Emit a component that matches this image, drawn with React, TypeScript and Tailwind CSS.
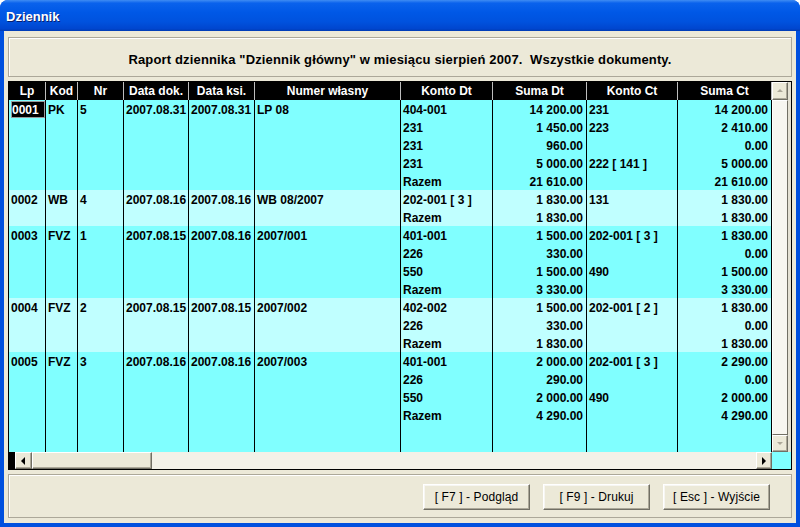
import React from "react";

type Line = [string, string, string, string];
type Group = {
  lp: string;
  kod: string;
  nr: string;
  dd: string;
  dk: string;
  num: string;
  light: boolean;
  lines: Line[];
};

const groups: Group[] = [
  {
    lp: "0001", kod: "PK", nr: "5", dd: "2007.08.31", dk: "2007.08.31", num: "LP 08", light: false,
    lines: [
      ["404-001", "14 200.00", "231", "14 200.00"],
      ["231", "1 450.00", "223", "2 410.00"],
      ["231", "960.00", "", "0.00"],
      ["231", "5 000.00", "222 [ 141 ]", "5 000.00"],
      ["Razem", "21 610.00", "", "21 610.00"],
    ],
  },
  {
    lp: "0002", kod: "WB", nr: "4", dd: "2007.08.16", dk: "2007.08.16", num: "WB 08/2007", light: true,
    lines: [
      ["202-001 [ 3 ]", "1 830.00", "131", "1 830.00"],
      ["Razem", "1 830.00", "", "1 830.00"],
    ],
  },
  {
    lp: "0003", kod: "FVZ", nr: "1", dd: "2007.08.15", dk: "2007.08.16", num: "2007/001", light: false,
    lines: [
      ["401-001", "1 500.00", "202-001 [ 3 ]", "1 830.00"],
      ["226", "330.00", "", "0.00"],
      ["550", "1 500.00", "490", "1 500.00"],
      ["Razem", "3 330.00", "", "3 330.00"],
    ],
  },
  {
    lp: "0004", kod: "FVZ", nr: "2", dd: "2007.08.15", dk: "2007.08.15", num: "2007/002", light: true,
    lines: [
      ["402-002", "1 500.00", "202-001 [ 2 ]", "1 830.00"],
      ["226", "330.00", "", "0.00"],
      ["Razem", "1 830.00", "", "1 830.00"],
    ],
  },
  {
    lp: "0005", kod: "FVZ", nr: "3", dd: "2007.08.16", dk: "2007.08.16", num: "2007/003", light: false,
    lines: [
      ["401-001", "2 000.00", "202-001 [ 3 ]", "2 290.00"],
      ["226", "290.00", "", "0.00"],
      ["550", "2 000.00", "490", "2 000.00"],
      ["Razem", "4 290.00", "", "4 290.00"],
    ],
  },
];

const W = ["w-[37px]", "w-[32px]", "w-[46px]", "w-[65px]", "w-[66px]", "w-[146px]", "w-[92px]", "w-[94px]", "w-[91px]", "w-[94px]"];
const RIGHT = [false, false, false, false, false, false, false, true, false, true];
const HEADERS = ["Lp", "Kod", "Nr", "Data dok.", "Data ksi.", "Numer własny", "Konto Dt", "Suma Dt", "Konto Ct", "Suma Ct"];

function Cell({ i, text, selected }: { i: number; text: string; selected?: boolean }) {
  return (
    <div
      className={`${W[i]} h-[18px] shrink-0 border-r border-black flex items-center pt-[1px] ${RIGHT[i] ? "justify-end pr-[3px]" : "justify-start pl-[2px]"} whitespace-nowrap overflow-hidden`}
    >
      {selected ? (
        <span className="bg-black text-white h-[17px] w-full flex items-center pl-[1px] outline outline-1 outline-[#9a9a9a] -outline-offset-1">
          {text}
        </span>
      ) : (
        text
      )}
    </div>
  );
}

function Arrow({ dir, color }: { dir: "up" | "down" | "left" | "right"; color: string }) {
  const pts: Record<string, string> = {
    up: "1,5 4,2 7,5",
    down: "1,2 4,5 7,2",
    left: "5,0 5,8 1,4",
    right: "2,0 2,8 6,4",
  };
  return (
    <svg width="8" height="8" viewBox="0 0 8 8">
      <polygon points={pts[dir]} fill={color} />
    </svg>
  );
}

function SbButton({ dir, color, cls }: { dir: "up" | "down" | "left" | "right"; color: string; cls: string }) {
  return (
    <div
      className={`${cls} shrink-0 bg-[#ece9d8] border border-t-white border-l-white border-b-[#716f64] border-r-[#716f64] shadow-[inset_-1px_-1px_0_#aca899] flex items-center justify-center`}
    >
      <Arrow dir={dir} color={color} />
    </div>
  );
}

function XpButton({ label }: { label: string }) {
  return (
    <div className="w-[107px] h-[26px] bg-[#ece9d8] border border-t-white border-l-white border-b-[#716f64] border-r-[#716f64] shadow-[inset_-1px_-1px_0_#aca899,inset_1px_1px_0_#f7f6f2] flex items-center justify-center text-[12px] text-black tracking-[0.1px]">
      {label}
    </div>
  );
}

export default function App() {
  return (
    <div className="w-[800px] h-[527px] bg-white" style={{ fontFamily: '"Liberation Sans", Arial, sans-serif' }}>
      <div className="w-[800px] h-[527px] rounded-t-[8px] overflow-hidden flex flex-col bg-[#0050df]">
        {/* Title bar */}
        <div className="h-[31px] shrink-0 bg-[linear-gradient(180deg,#3f8cf3_0%,#0a62ec_10%,#0058e6_40%,#0052de_70%,#0046cf_92%,#003bb4_100%)] flex items-center pl-[6px] pt-[2px]">
          <span className="text-white font-bold text-[13px] [text-shadow:1px_1px_0_#0a1f6e]">Dziennik</span>
        </div>
        {/* Client */}
        <div className="flex-1 mx-[4px] mb-[4px] bg-[#ece9d8] flex flex-col px-[4px] pt-[6px] pb-[5px]">
          {/* header panel */}
          <div className="h-[40px] shrink-0 border border-[#aca899] shadow-[inset_1px_1px_0_#ffffff] flex items-center justify-center pt-[6px]">
            <span className="font-bold text-[13px] tracking-[0.15px] text-black whitespace-pre">
              Raport dziennika "Dziennik główny" w miesiącu sierpień 2007.  Wszystkie dokumenty.
            </span>
          </div>
          {/* table */}
          <div className="mt-[4px] h-[389px] shrink-0 border border-black flex flex-col">
            <div className="flex h-[370px]">
              {/* grid */}
              <div className="w-[763px] flex flex-col font-bold text-[12px] text-black">
                <div className="flex h-[18px] bg-black text-white">
                  {HEADERS.map((h, i) => (
                    <div
                      key={i}
                      className={`${W[i]} h-[18px] shrink-0 border-r border-[#bdbdbd] flex items-center justify-center whitespace-nowrap`}
                    >
                      {h}
                    </div>
                  ))}
                </div>
                {groups.map((g, gi) => (
                  <div key={gi} className={g.light ? "bg-[#c0ffff]" : "bg-[#80ffff]"}>
                    {g.lines.map((ln, li) => {
                      const left = li === 0 ? [g.lp, g.kod, g.nr, g.dd, g.dk, g.num] : ["", "", "", "", "", ""];
                      const all = [...left, ...ln];
                      return (
                        <div key={li} className="flex h-[18px]">
                          {all.map((t, i) => (
                            <Cell key={i} i={i} text={t} selected={gi === 0 && li === 0 && i === 0} />
                          ))}
                        </div>
                      );
                    })}
                  </div>
                ))}
                <div className="flex-1 flex bg-[#80ffff]">
                  {W.map((w, i) => (
                    <div key={i} className={`${w} shrink-0 border-r border-black`} />
                  ))}
                </div>
              </div>
              {/* vertical scrollbar */}
              <div className="w-[19px] flex bg-[#f3f1e8]">
                <div className="w-[16px] flex flex-col">
                  <SbButton dir="up" color="#aca899" cls="h-[18px] w-[16px]" />
                  <div className="flex-1 bg-[#f7f6f0] border border-t-white border-l-white border-b-[#716f64] border-r-[#716f64]" />
                  <SbButton dir="down" color="#aca899" cls="h-[17px] w-[16px]" />
                </div>
                <div className="flex-1 bg-[#e4e1d3]" />
              </div>
            </div>
            {/* horizontal scrollbar */}
            <div className="flex h-[17px]">
              <div className="w-[6px] bg-black" />
              <SbButton dir="left" color="#000000" cls="w-[17px] h-[17px]" />
              <div className="w-[120px] h-[17px] bg-[#ece9d8] border border-t-white border-l-white border-b-[#716f64] border-r-[#716f64] shadow-[inset_-1px_-1px_0_#aca899]" />
              <div className="flex-1 bg-[#f3f1e8]" />
              <SbButton dir="right" color="#000000" cls="w-[16px] h-[17px]" />
              <div className="w-[19px] bg-[#80ffff]" />
            </div>
          </div>
          {/* bottom panel */}
          <div className="mt-[4px] h-[44px] shrink-0 border border-[#aca899] shadow-[inset_1px_1px_0_#ffffff] flex items-center justify-end gap-[13px] pr-[21px] pt-[1px]">
            <XpButton label="[ F7 ] - Podgląd" />
            <XpButton label="[ F9 ] - Drukuj" />
            <XpButton label="[ Esc ] - Wyjście" />
          </div>
        </div>
      </div>
    </div>
  );
}
